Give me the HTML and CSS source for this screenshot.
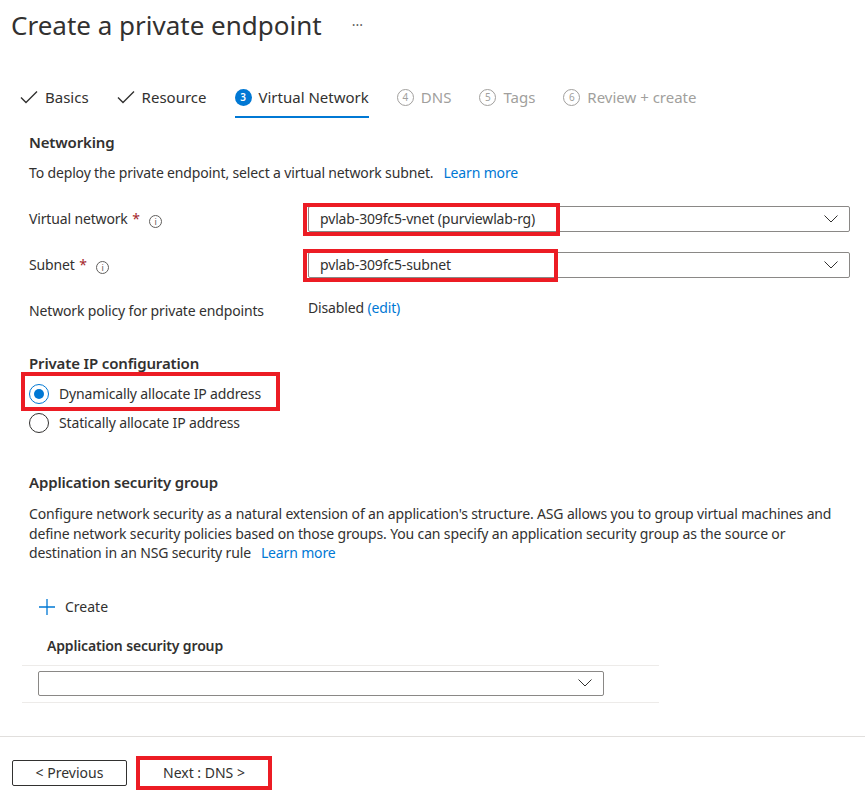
FILE: index.html
```html
<!DOCTYPE html>
<html lang="en">
<head>
<meta charset="utf-8">
<title>Create a private endpoint</title>
<link rel="stylesheet" href="styles.css">
</head>
<body>
<header class="page-header">
  <h1 class="page-title">Create a private endpoint</h1>
  <span class="more">···</span>
</header>

<nav class="tabs">
  <div class="tab done">
    <svg class="check" viewBox="0 0 18 14" width="18" height="14"><path d="M1 7.5 L6 12.5 L17 1.5" fill="none" stroke="#323130" stroke-width="1.4"/></svg>
    <span>Basics</span>
  </div>
  <div class="tab done">
    <svg class="check" viewBox="0 0 18 14" width="18" height="14"><path d="M1 7.5 L6 12.5 L17 1.5" fill="none" stroke="#323130" stroke-width="1.4"/></svg>
    <span>Resource</span>
  </div>
  <div class="tab active">
    <span class="step">3</span>
    <span>Virtual Network</span>
  </div>
  <div class="tab pending">
    <span class="step">4</span>
    <span>DNS</span>
  </div>
  <div class="tab pending">
    <span class="step">5</span>
    <span>Tags</span>
  </div>
  <div class="tab pending">
    <span class="step">6</span>
    <span>Review + create</span>
  </div>
</nav>

<main class="content">
  <h2 class="section-title first">Networking</h2>
  <p class="section-desc">To deploy the private endpoint, select a virtual network subnet.<a class="link" href="#">Learn more</a></p>

  <div class="form-row">
    <div class="label">Virtual network <span class="req">*</span> <span class="info">i</span></div>
    <div class="select">
      <span class="select-value">pvlab-309fc5-vnet (purviewlab-rg)</span>
      <svg class="chev" viewBox="0 0 14 8" width="14" height="8"><path d="M0.5 0.5 L7 7 L13.5 0.5" fill="none" stroke="#323130" stroke-width="1"/></svg>
      <span class="mark mark-vnet"></span>
    </div>
  </div>

  <div class="form-row">
    <div class="label">Subnet <span class="req">*</span> <span class="info">i</span></div>
    <div class="select">
      <span class="select-value">pvlab-309fc5-subnet</span>
      <svg class="chev" viewBox="0 0 14 8" width="14" height="8"><path d="M0.5 0.5 L7 7 L13.5 0.5" fill="none" stroke="#323130" stroke-width="1"/></svg>
      <span class="mark mark-subnet"></span>
    </div>
  </div>

  <div class="form-row policy">
    <div class="label">Network policy for private endpoints</div>
    <div class="value">Disabled <a class="link plain" href="#">(edit)</a></div>
  </div>

  <h2 class="section-title ip">Private IP configuration</h2>
  <div class="radios">
    <label class="radio checked">
      <span class="radio-circle"></span>
      <span>Dynamically allocate IP address</span>
      <span class="mark mark-radio"></span>
    </label>
    <label class="radio">
      <span class="radio-circle"></span>
      <span>Statically allocate IP address</span>
    </label>
  </div>

  <h2 class="section-title asg">Application security group</h2>
  <p class="asg-desc">Configure network security as a natural extension of an application's structure. ASG allows you to group virtual machines and define network security policies based on those groups. You can specify an application security group as the source or destination in an NSG security rule<a class="link" href="#">Learn more</a></p>

  <button class="create" type="button">
    <svg viewBox="0 0 18 18" width="18" height="18"><path d="M9 1 V17 M1 9 H17" stroke="#0078d4" stroke-width="1.3" fill="none"/></svg>
    <span>Create</span>
  </button>

  <div class="asg-table">
    <div class="asg-head">Application security group</div>
    <div class="asg-row">
      <div class="select small">
        <svg class="chev" viewBox="0 0 14 8" width="14" height="8"><path d="M0.5 0.5 L7 7 L13.5 0.5" fill="none" stroke="#323130" stroke-width="1"/></svg>
      </div>
    </div>
  </div>
</main>

<footer class="footer">
  <button class="btn" type="button">&lt; Previous</button>
  <button class="btn next" type="button">Next : DNS &gt;<span class="mark mark-next"></span></button>
</footer>
</body>
</html>
```

FILE: styles.css
```css
* { box-sizing: border-box; }

html, body {
  margin: 0;
  padding: 0;
  background: #ffffff;
}

body {
  font-family: "Noto Sans", "Open Sans", sans-serif;
  font-size: 14px;
  line-height: 20px;
  letter-spacing: -0.15px;
  color: #323130;
  width: 865px;
  height: 802px;
  overflow: hidden;
}

.page-header {
  display: flex;
  align-items: center;
  padding: 8px 0 0 11px;
  height: 42px;
}

.page-title {
  margin: 0;
  font-size: 26px;
  line-height: 34px;
  font-weight: 400;
  letter-spacing: 0;
  color: #323130;
}

.more {
  margin-left: 30px;
  font-size: 14px;
  color: #605e5c;
  letter-spacing: 0;
}

.tabs {
  display: flex;
  margin-top: 42px;
  padding-left: 20px;
  gap: 28px;
}

.tab {
  display: flex;
  align-items: center;
  gap: 7px;
  height: 34px;
  padding-bottom: 6px;
  font-size: 15px;
  letter-spacing: 0;
  border-bottom: 2px solid transparent;
}

.tab.active {
  border-bottom-color: #0078d4;
}

.tab.pending {
  color: #a19f9d;
}

.check {
  display: block;
}

.step {
  display: inline-flex;
  align-items: center;
  justify-content: center;
  width: 17px;
  height: 17px;
  border-radius: 50%;
  font-size: 10px;
  line-height: 1;
  font-weight: 600;
}

.tab.active .step {
  background: #0078d4;
  color: #ffffff;
}

.tab.pending .step {
  border: 1px solid #a19f9d;
  color: #a19f9d;
  font-weight: 400;
}

.content {
  padding: 0 15px 0 29px;
}

.section-title {
  margin: 0;
  font-size: 15px;
  line-height: 20px;
  font-weight: 600;
}

.section-title.first { margin-top: 14px; }
.section-title.ip { margin-top: 32px; }
.section-title.asg { margin-top: 35px; }

.section-desc {
  margin: 11px 0 0;
}

.link {
  color: #0078d4;
  text-decoration: none;
  margin-left: 10px;
}

.link.plain { margin-left: 0; }

.form-row {
  display: grid;
  grid-template-columns: 279px 1fr;
  align-items: center;
  margin-top: 20px;
}

.section-desc + .form-row { margin-top: 23px; }

.req {
  color: #a4262c;
  margin-left: 1px;
}

.info {
  display: inline-flex;
  align-items: center;
  justify-content: center;
  width: 13px;
  height: 13px;
  margin-left: 6px;
  border: 1px solid #605e5c;
  border-radius: 50%;
  font-size: 9px;
  line-height: 1;
  color: #605e5c;
  vertical-align: -1px;
  letter-spacing: 0;
}

.select {
  position: relative;
  display: flex;
  align-items: center;
  justify-content: space-between;
  height: 26px;
  border: 1px solid #8a8886;
  border-radius: 2px;
  padding: 0 11px;
}

.select-value {
  white-space: nowrap;
}

.chev {
  display: block;
  margin-left: auto;
}

.mark {
  position: absolute;
  border: 4px solid #ec1c24;
  pointer-events: none;
}

.mark-vnet {
  left: -6px;
  top: -4px;
  width: 257px;
  height: 33px;
}

.mark-subnet {
  left: -6px;
  top: -4px;
  width: 255px;
  height: 33px;
}

.policy {
  align-items: start;
}

.policy .label { padding-top: 3px; }

.radios {
  margin-top: 6px;
}

.radio {
  position: relative;
  display: flex;
  align-items: center;
  gap: 10px;
  height: 29px;
}

.radio-circle {
  width: 20px;
  height: 20px;
  border: 1px solid #323130;
  border-radius: 50%;
  display: flex;
  align-items: center;
  justify-content: center;
}

.radio.checked .radio-circle {
  border-color: #0078d4;
}

.radio.checked .radio-circle::after {
  content: "";
  width: 10px;
  height: 10px;
  border-radius: 50%;
  background: #0078d4;
}

.mark-radio {
  left: -8px;
  top: -7px;
  width: 259px;
  height: 39px;
}

.asg-desc {
  margin: 12px 0 0;
  line-height: 19.5px;
}

.create {
  display: flex;
  align-items: center;
  gap: 9px;
  margin-top: 28px;
  margin-left: 9px;
  height: 32px;
  padding: 0;
  border: none;
  background: none;
  font: inherit;
  color: #323130;
}

.asg-table {
  margin: 4px 0 0 -7px;
  width: 637px;
}

.asg-head {
  height: 39px;
  padding: 0 25px;
  display: flex;
  align-items: center;
  font-weight: 600;
  border-bottom: 1px solid #edebe9;
}

.asg-row {
  padding: 5px 55px 6px 16px;
  border-bottom: 1px solid #edebe9;
}

.select.small {
  height: 25px;
  width: 566px;
  padding: 0 11px;
}

.footer {
  margin-top: 33px;
  border-top: 1px solid #e1dfdd;
  display: flex;
  align-items: center;
  gap: 13px;
  padding: 23px 0 0 12px;
}

.btn {
  position: relative;
  height: 26px;
  width: 115px;
  border: 1px solid #323130;
  border-radius: 2px;
  background: #ffffff;
  font: inherit;
  color: #323130;
  padding: 0;
}

.btn.next {
  width: 128px;
  border-color: #ffffff;
}

.mark-next {
  left: -5px;
  top: -5px;
  right: -5px;
  bottom: -5px;
}
```
